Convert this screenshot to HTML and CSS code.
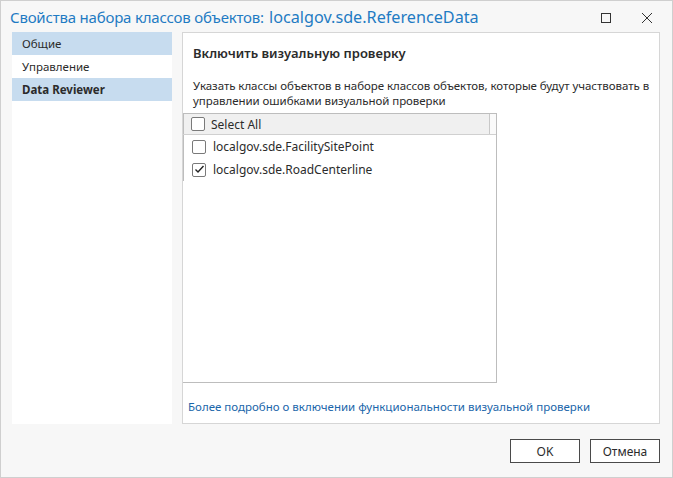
FILE: index.html
```html
<!DOCTYPE html>
<html lang="ru">
<head>
    <meta charset="UTF-8">
    <title>Свойства набора классов объектов</title>
    <link rel="stylesheet" href="styles.css">
</head>
<body>

<div class="window">
    <div class="titlebar">
        <div class="title">
            <span class="title-label">Свойства набора классов объектов:</span>
            <span class="title-name">localgov.sde.ReferenceData</span>
        </div>
        <div class="title-buttons">
            <span class="tb-btn">
                <svg width="12" height="12" viewBox="0 0 12 12"><rect x="1.5" y="1.5" width="9" height="9" fill="none" stroke="#333" stroke-width="1"/></svg>
            </span>
            <span class="tb-btn">
                <svg width="12" height="12" viewBox="0 0 12 12"><path d="M1 1 L11 11 M11 1 L1 11" stroke="#333" stroke-width="1"/></svg>
            </span>
        </div>
    </div>

    <div class="main">
        <div class="nav">
            <div class="nav-item selected">Общие</div>
            <div class="nav-item">Управление</div>
            <div class="nav-item selected bold">Data Reviewer</div>
        </div>

        <div class="panel">
            <h3>Включить визуальную проверку</h3>
            <p class="desc">Указать классы объектов в наборе классов объектов, которые будут участвовать в управлении ошибками визуальной проверки</p>

            <div class="list">
                <div class="list-header">
                    <div class="header-cell">
                        <span class="check"></span>
                        <span>Select All</span>
                    </div>
                    <div class="header-rest"></div>
                </div>
                <div class="row">
                    <span class="check"></span>
                    <span>localgov.sde.FacilitySitePoint</span>
                </div>
                <div class="row">
                    <span class="check checked">
                        <svg width="11" height="11" viewBox="0 0 11 11"><path d="M1.5 5.5 L4 8 L9.5 2" fill="none" stroke="#222" stroke-width="1.4"/></svg>
                    </span>
                    <span>localgov.sde.RoadCenterline</span>
                </div>
            </div>

            <a class="more" href="#">Более подробно о включении функциональности визуальной проверки</a>
        </div>
    </div>

    <div class="footer">
        <button class="btn">OK</button>
        <button class="btn">Отмена</button>
    </div>
</div>

</body>
</html>
```

FILE: styles.css
```css
* {
    box-sizing: border-box;
}
body {
    margin: 0;
    font-family: "Noto Sans", "Open Sans", sans-serif;
    font-size: 12px;
    color: #2b2b2b;
    background: #f7f7f7;
}
.window {
    width: 673px;
    height: 478px;
    border: 1px solid #cfcfcf;
    background: #f7f7f7;
    display: flex;
    flex-direction: column;
}
.titlebar {
    height: 31px;
    display: flex;
    align-items: center;
    justify-content: space-between;
    padding: 0 19px 0 9px;
}
.title {
    color: #1f7bc3;
    white-space: nowrap;
}
.title-label {
    font-size: 15px;
    letter-spacing: -0.2px;
}
.title-name {
    font-size: 16.2px;
    margin-left: 2px;
}
.title-buttons {
    display: flex;
    gap: 29px;
    margin-top: 2px;
}
.tb-btn {
    display: flex;
}
.main {
    display: flex;
    gap: 10px;
    padding-left: 11px;
    height: 392px;
}
.nav {
    width: 160px;
    background: #ffffff;
}
.nav-item {
    height: 23px;
    line-height: 23px;
    padding-left: 10px;
    font-size: 11.5px;
}
.nav-item.selected {
    background: #c7dcef;
}
.nav-item.bold {
    font-weight: bold;
}
.panel {
    width: 478px;
    background: #ffffff;
    border: 1px solid #d6d6d6;
}
h3 {
    margin: 11px 0 0 10px;
    font-size: 13px;
    font-weight: 600;
    color: #2b2b2b;
}
.desc {
    margin: 16px 6px 0 10px;
    font-size: 11.5px;
    line-height: 15px;
    letter-spacing: -0.05px;
}
.list {
    margin-top: 5px;
    width: 314px;
    height: 270px;
    border: 1px solid #bdbdbd;
    border-left: none;
}
.list-header {
    display: flex;
    height: 21px;
    border-bottom: 1px solid #d0d0d0;
}
.header-cell {
    flex: 1;
    display: flex;
    align-items: center;
    gap: 6px;
    padding-left: 7px;
    background: #f0f0f0;
    border-right: 1px solid #c8c8c8;
    border-left: 1px solid #bdbdbd;
}
.header-rest {
    width: 6px;
    background: #fafafa;
}
.row {
    display: flex;
    align-items: center;
    gap: 7px;
    height: 23px;
    padding-left: 8px;
    border-left: 1px solid #bdbdbd;
}
.check {
    width: 14px;
    height: 14px;
    border: 1px solid #7a7a7a;
    border-radius: 2px;
    background: #ffffff;
    display: flex;
    align-items: center;
    justify-content: center;
}
.more {
    display: block;
    margin: 16px 0 0 5px;
    color: #1b66aa;
    text-decoration: none;
    font-size: 11.5px;
}
.footer {
    display: flex;
    justify-content: flex-end;
    gap: 10px;
    padding: 15px 12px 0 0;
}
.btn {
    width: 70px;
    height: 24px;
    background: #ffffff;
    border: 1px solid #4a4a4a;
    font-family: "Noto Sans", sans-serif;
    font-size: 12px;
    color: #2b2b2b;
    padding: 0;
}
```
